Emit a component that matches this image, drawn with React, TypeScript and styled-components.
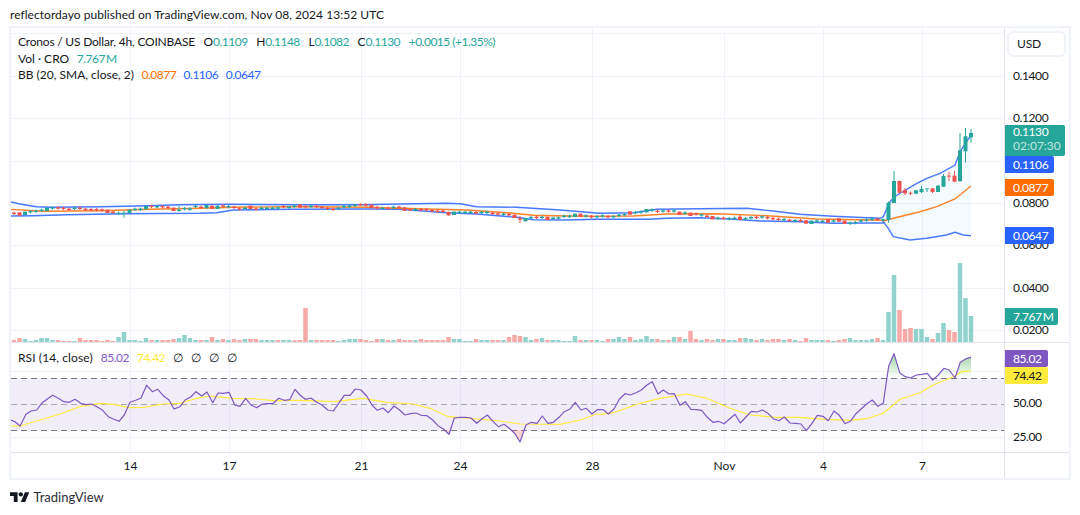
import React from "react";
import styled, { createGlobalStyle } from "styled-components";

const FONT = `Lato, "Noto Sans", "Liberation Sans", sans-serif`;
const GREEN = "#26a69a";
const RED = "#ef5350";
const BLUE = "#2962ff";
const ORANGE = "#ff6d00";
const PURPLE = "#7e57c2";
const YELLOW = "#ffeb3b";

const Global = createGlobalStyle`
  html, body { margin: 0; padding: 0; background: #fff; }
  body { font-family: ${FONT}; color: #131722; overflow: hidden; }
`;

const Page = styled.div`
  width: 1080px;
  height: 515px;
  display: flex;
  flex-direction: column;
`;
const Published = styled.div`
  height: 26px;
  padding: 0 0 0 10px;
  font-size: 12px;
  line-height: 30px;
  letter-spacing: 0.04px;
  color: #131722;
  white-space: nowrap;
`;
const Frame = styled.div`
  width: 1058px;
  height: 450px;
  margin-left: 9px;
  border: 2px solid #f0f3fa;
  display: grid;
  grid-template-columns: 993px 65px;
  grid-template-rows: 315px 110px 25px;
`;
const Pane = styled.div`
  position: relative;
  border-bottom: 1px solid #e0e3eb;
`;
const Scale = styled.div`
  position: relative;
  border-left: 1px solid #e0e3eb;
  border-bottom: 1px solid #e0e3eb;
`;
const Plot = styled.svg`
  display: block;
`;
const Legend = styled.div`
  position: absolute;
  left: 7px;
  top: 6px;
  display: flex;
  flex-direction: column;
  font-size: 12px;
  line-height: 16.6px;
`;
const LegendRow = styled.div<{ $tight?: boolean }>`
  display: flex;
  gap: ${(p) => (p.$tight ? 8.6 : 7.5)}px;
  white-space: nowrap;
  letter-spacing: ${(p) => (p.$tight ? "-0.2px" : "0")};
`;
const Pair = styled.span`
  display: inline-flex;
`;
const Val = styled.span<{ $c: string }>`
  color: ${(p) => p.$c};
  letter-spacing: -0.5px;
`;
const RsiLegend = styled(LegendRow)`
  position: absolute;
  left: 7px;
  top: 6px;
  font-size: 12px;
  line-height: 17px;
  letter-spacing: 0.1px;
  gap: 8px;
`;
const UsdButton = styled.div`
  position: absolute;
  left: 2px;
  top: 3px;
  width: 47px;
  height: 22px;
  border: 2px solid #f0f3fa;
  border-radius: 6px;
  font-size: 12px;
  letter-spacing: -0.2px;
  line-height: 22px;
  padding-left: 8px;
`;
const Tick = styled.div<{ $y: number }>`
  position: absolute;
  left: 8px;
  top: ${(p) => p.$y}px;
  transform: translateY(-50%);
  font-size: 12px;
  line-height: 14px;
  letter-spacing: -0.4px;
  color: #131722;
`;
const Tag = styled.div<{ $y: number; $h?: number; $w: number; $bg: string; $fg?: string }>`
  position: absolute;
  left: 0;
  top: ${(p) => p.$y}px;
  width: ${(p) => p.$w - 8}px;
  height: ${(p) => p.$h ?? 17}px;
  padding-left: 8px;
  background: ${(p) => p.$bg};
  color: ${(p) => p.$fg ?? "#fff"};
  font-size: 12px;
  line-height: ${(p) => (p.$h ? 14 : 17)}px;
  letter-spacing: -0.4px;
  border-radius: 0 2px 2px 0;
  white-space: nowrap;
`;
const Countdown = styled.div`
  color: rgba(255, 255, 255, 0.72);
  letter-spacing: 0;
`;
const TimeAxis = styled.div`
  position: relative;
`;
const TimeLabel = styled.div<{ $x: number }>`
  position: absolute;
  left: ${(p) => p.$x}px;
  top: 5px;
  transform: translateX(-50%);
  font-size: 12px;
  line-height: 16px;
`;
const Corner = styled.div`
  border-left: 1px solid #e0e3eb;
`;
const Footer = styled.div`
  display: flex;
  align-items: center;
  gap: 4px;
  padding: 8px 0 0 10px;
  font-size: 13px;
  line-height: 18px;
  color: #2a2e39;
`;
const Logo = styled.svg`
  display: block;
`;

const VOL = [
  9,-6,-12,9,3,6,12,12,6,-6,-3,-3,3,-12,-6,-6,-6,-3,-6,-3,15,30,6,6,3,12,-6,6,-6,-6,-9,12,21,12,6,-6,6,-15,6,-9,6,-9,-6,9,-9,-9,6,6,6,-6,6,6,-5,
  -6,-102,6,-6,-6,-6,-6,3,6,9,9,-9,-6,-3,-9,9,-6,6,-9,-6,-6,6,-9,-6,-6,-6,-6,-15,9,9,3,3,-9,6,6,-6,-6,6,-15,-21,-18,15,6,-9,12,-6,6,6,3,3,18,-6,6,-6,6,
  3,-9,9,15,9,-15,6,9,18,9,-9,6,-6,15,-15,9,-33,-9,6,-9,-6,9,-9,6,6,-12,12,9,-6,9,-6,-9,-9,6,-9,6,-3,-12,6,6,6,-6,3,-6,-9,12,6,6,6,9,-12,6,
  90,201,-96,-39,-42,39,39,15,-9,27,57,-36,-30,237,132,78,
];

// Body centres in zoomed units (y = 190 + z / 3); negative means a falling candle.
const CANDLE = [
  70,-70,-72,70,65,64,61,58,54,-54,-55,-58,55,-55,-58,-59,-59,-60,-64,-67,70,70,64,58,58,53,-49,50,-50,-52,-58,61,56,57,49,-52,50,-52,52,-48,50,-52,-57,55,-52,-57,55,55,55,54,-50,52,49,
  -48,-50,49,-49,-52,-55,-58,55,50,49,46,-44,-45,-49,-53,55,-55,52,-52,-57,-59,59,-59,-59,-62,-64,-64,-71,70,67,67,67,-68,67,67,-70,-72,73,-74,-79,-87,89,83,-82,82,-85,85,84,79,79,76,-76,78,-80,80,
  78,-80,80,76,74,-69,68,66,62,60,-64,63,-63,63,-70,69,-73,-72,75,-79,-83,85,-85,86,85,-85,86,83,-82,81,-83,-86,-88,89,-91,92,-92,-96,97,93,94,-93,93,-90,-97,100,98,93,90,88,-88,90,
];
const BIG = new Set([2,3,7,18,22,25,30,36,37,38,44,53,66,72,80,81,92,94,98,103,104,113,116,122,124,128,133,145,146,149,151,152]);
const WICK: Record<number, [number, number]> = {
  21: [62, 83], 31: [47, 65], 54: [44, 56], 64: [40, 48], 79: [58, 68], 80: [65, 77], 93: [78, 99], 133: [75, 91], 145: [90, 101],
};
const LATE: [number, number, number, number, number][] = [
  [1, 202.7, 220, 201.7, 222.7],
  [1, 181, 203, 171, 203],
  [0, 181, 192.7, 180.5, 193.3],
  [0, 190, 193.3, 188, 195],
  [0, 192.8, 193.8, 191.5, 195],
  [1, 190.3, 193.7, 190.3, 193.7],
  [1, 189, 192, 185.7, 193],
  [1, 188.4, 189.2, 188.4, 192],
  [0, 188.3, 192, 188.3, 193],
  [1, 185.7, 192, 185, 192],
  [1, 176, 186.7, 174, 186.7],
  [0, 175.6, 176.6, 171.7, 181],
  [0, 175.7, 181.7, 171, 181.7],
  [1, 150.3, 181.3, 133, 181.3],
  [1, 136.3, 151.3, 128, 162.7],
  [1, 133, 137.3, 129, 142.7],
];
const barX = (i: number) => 8.5 + 5.5 * i;

type P = [number, number];
const z = (pts: P[], ox: number, oy: number) => pts.map(([x, y]) => [ox + x / 3, oy + y / 3] as P);
const str = (pts: P[]) => pts.map(([x, y]) => `${x.toFixed(1)},${y.toFixed(1)}`).join(" ");

const UPPER: P[] = [
  ...z([[30,35],[60,42],[110,50],[150,52],[300,50],[440,47],[540,44],[688,43],[880,44]], 0, 190),
  ...z([[0,44],[184,44],[300,42],[440,40],[481,41],[530,50],[650,52],[780,60],[890,69]], 300, 190),
  ...z([[0,70],[100,68],[170,58],[300,56],[440,55],[520,63],[600,73],[700,79],[840,85]], 600, 190),
  ...z([[70,590],[88,548],[103,530],[170,490],[200,475],[240,460],[285,435],[300,395],[333,345]], 860, 20),
];
const LOWER: P[] = [
  ...z([[30,78],[100,77],[200,74],[380,71],[600,70],[650,68],[700,60],[880,58]], 0, 190),
  ...z([[0,58],[200,57],[300,58],[440,68],[530,72],[650,82],[700,89],[800,90],[890,88]], 300, 190),
  ...z([[0,88],[150,88],[200,85],[300,83],[400,88],[480,93],[600,95],[700,100],[800,99],[850,98]], 600, 190),
  ...z([[70,605],[85,625],[100,650],[150,660],[200,655],[260,645],[285,637],[310,645],[333,647]], 860, 20),
];
const BASIS: P[] = [
  ...z([[30,58],[130,64],[300,62],[450,58],[600,55],[700,52],[880,50]], 0, 190),
  ...z([[0,50],[200,52],[350,56],[500,60],[620,68],[700,76],[800,78],[890,79]], 300, 190),
  ...z([[0,79],[100,78],[200,72],[350,71],[500,77],[650,87],[850,91]], 600, 190),
  ...z([[70,603],[100,595],[180,575],[230,560],[285,537],[333,498]], 860, 20),
];

const RSI: P[] = [
  ...z([[33,240],[45,245],[60,258],[78,223],[93,213],[110,210],[125,190],[143,176],[158,166],[175,175],[192,185],[208,187],[225,178],[242,190],[258,194],[275,192],[292,201],[308,211],[325,230],[340,237],[357,244],[373,225],[390,187],[407,181],[423,174],[440,136],[457,155],[473,148],[490,167],[507,180],[522,207],[540,200],[555,180],[572,171],[588,155],[605,168],[621,156],[638,188],[654,159],[670,160],[687,157],[704,195],[720,199],[737,175],[753,195],[770,203],[787,192],[803,191],[820,190],[836,175],[853,181],[869,179],[885,148]], 0, 340),
  ...z([[0,165],[16,178],[33,174],[50,187],[66,195],[83,210],[100,213],[116,190],[133,166],[150,166],[166,147],[183,150],[200,168],[216,195],[232,211],[249,204],[265,218],[282,198],[298,209],[315,225],[331,221],[348,219],[364,226],[381,227],[398,240],[414,257],[431,268],[447,283],[463,234],[480,232],[497,232],[513,234],[530,250],[546,236],[562,225],[579,244],[595,260],[612,253],[628,265],[645,281],[660,306],[678,255],[694,247],[711,250],[727,228],[744,250],[760,247],[777,232],[793,215],[810,207],[826,187],[843,210],[859,205],[876,222],[892,209]], 300, 340),
  ...z([[10,209],[25,222],[42,207],[58,178],[75,161],[91,165],[108,158],[124,150],[141,135],[157,125],[174,162],[190,150],[207,162],[223,161],[240,196],[256,185],[273,208],[289,209],[305,211],[322,232],[339,247],[355,244],[372,251],[388,238],[405,223],[421,249],[438,231],[454,214],[471,216],[487,210],[504,220],[520,236],[537,242],[553,231],[570,249],[586,250],[603,252],[619,272],[636,250],[652,226],[669,229],[685,242],[702,213],[718,226],[735,251],[751,244],[768,221],[784,206],[801,191],[817,180],[834,199],[850,189],[866,78],[882,41],[899,98],[916,110],[932,114],[949,105],[965,103],[982,100],[998,120],[1015,105],[1031,85],[1048,90],[1065,114],[1081,67],[1098,56],[1113,52]], 600, 340),
];
const RSI_MA: P[] = [
  ...z([[33,258],[60,258],[120,240],[180,222],[240,200],[300,190],[340,193],[390,203],[430,202],[490,192],[540,190],[590,175],[630,168],[700,175],[760,176],[820,182],[890,181]], 0, 340),
  ...z([[0,181],[100,185],[190,175],[260,187],[340,192],[390,205],[445,230],[510,235],[600,243],[660,252],[780,253],[840,240],[890,222]], 300, 340),
  ...z([[0,224],[40,218],[120,190],[180,175],[260,162],[320,175],[390,205],[450,225],[530,232],[600,232],[680,238],[750,241],[800,236],[850,220],[900,178],[960,158],[1000,135],[1065,108],[1085,95],[1113,93]], 600, 340),
];

const VGRID = [130.5, 229.5, 361.5, 460.5, 592.5, 724.5, 823.5, 922.5];
const MAIN_H = [33.5, 76.5, 118.5, 161.5, 203.5, 245.5, 288.5, 330.5];
const RSI_H = [371.5, 437.5];
const PX1 = 11;
const PX2 = 1004;

const Grid = ({ hs, y1, y2 }: { hs: number[]; y1: number; y2: number }) => (
  <g stroke="#f0f3fa" strokeWidth="1" shapeRendering="crispEdges">
    {VGRID.map((x) => <line key={x} x1={x} x2={x} y1={y1} y2={y2} />)}
    {hs.map((y) => <line key={y} x1={PX1} x2={PX2} y1={y} y2={y} />)}
  </g>
);

const Candles = () => (
  <g>
    {CANDLE.map((v, i) => {
      const c = v > 0 ? GREEN : RED;
      const zy = Math.abs(v);
      const h = BIG.has(i) ? 5 : 2;
      const w = WICK[i] ?? [zy - 5, zy + 5];
      const x = barX(i);
      return (
        <g key={i} fill={c}>
          <rect x={x - 0.5} y={190 + w[0] / 3} width={1} height={(w[1] - w[0]) / 3} />
          <rect x={x - 2} y={190 + (zy - h) / 3} width={4} height={(2 * h) / 3} />
        </g>
      );
    })}
    {LATE.map(([up, t, b, hi, lo], k) => {
      const x = barX(160 + k);
      return (
        <g key={k} fill={up ? GREEN : RED}>
          <rect x={x - 0.5} y={hi} width={1} height={lo - hi} />
          <rect x={x - 2} y={t} width={4} height={b - t} />
        </g>
      );
    })}
  </g>
);

const MainChart = () => (
  <Plot width={993} height={314} viewBox="11 28 993 314">
    <Grid hs={MAIN_H} y1={28} y2={342} />
    <polygon points={str([...UPPER, ...[...LOWER].reverse()])} fill="#2196f3" fillOpacity="0.05" />
    {VOL.map((v, i) => {
      const h = Math.abs(v) / 3;
      return (
        <rect key={i} x={barX(i) - 2.25} y={342 - h} width={4.5} height={h} fill={v > 0 ? "#92d2cc" : "#f7a9a8"} />
      );
    })}
    <polyline points={str(UPPER)} fill="none" stroke={BLUE} strokeOpacity="0.85" strokeWidth="1.4" />
    <polyline points={str(LOWER)} fill="none" stroke={BLUE} strokeOpacity="0.85" strokeWidth="1.4" />
    <polyline points={str(BASIS)} fill="none" stroke={ORANGE} strokeOpacity="0.85" strokeWidth="1.4" />
    <Candles />
  </Plot>
);

const RsiChart = () => {
  const first = RSI[0];
  const last = RSI[RSI.length - 1];
  const area = str([[first[0], 378], ...RSI, [last[0], 378]]);
  const areaLow = str([[first[0], 430], ...RSI, [last[0], 430]]);
  return (
    <Plot width={993} height={109} viewBox="11 343 993 109">
      <defs>
        <linearGradient id="over" x1="0" y1="353" x2="0" y2="378" gradientUnits="userSpaceOnUse">
          <stop offset="0" stopColor="#4caf50" stopOpacity="0.55" />
          <stop offset="1" stopColor="#4caf50" stopOpacity="0" />
        </linearGradient>
        <clipPath id="above"><rect x="11" y="343" width="993" height="35" /></clipPath>
        <clipPath id="below"><rect x="11" y="430" width="993" height="22" /></clipPath>
      </defs>
      <Grid hs={RSI_H} y1={343} y2={452} />
      <rect x={PX1} y={378} width={PX2 - PX1} height={52} fill={PURPLE} fillOpacity="0.1" />
      <g strokeWidth="1" shapeRendering="crispEdges" strokeDasharray="6 4">
        <line x1={PX1} x2={PX2} y1={378.5} y2={378.5} stroke="#787b86" />
        <line x1={PX1} x2={PX2} y1={404.5} y2={404.5} stroke="#787b86" strokeOpacity="0.6" />
        <line x1={PX1} x2={PX2} y1={430.5} y2={430.5} stroke="#787b86" />
      </g>
      <polygon points={area} fill="url(#over)" clipPath="url(#above)" />
      <polygon points={areaLow} fill="#ef5350" fillOpacity="0.25" clipPath="url(#below)" />
      <polyline points={str(RSI_MA)} fill="none" stroke={YELLOW} strokeWidth="1.2" />
      <polyline points={str(RSI)} fill="none" stroke={PURPLE} strokeWidth="1.2" strokeLinejoin="round" />
    </Plot>
  );
};

const TIMES: [string, number][] = [["14", 119.5], ["17", 218.5], ["21", 350.5], ["24", 449.5], ["28", 581.5], ["Nov", 713.5], ["4", 812.5], ["7", 911.5]];
const PRICES: [string, number][] = [["0.1400", 48], ["0.1200", 90], ["0.0800", 175], ["0.0600", 217], ["0.0400", 259.5], ["0.0200", 301.5]];

export default function App() {
  return (
    <Page>
      <Global />
      <Published>reflectordayo published on TradingView.com, Nov 08, 2024 13:52 UTC</Published>
      <Frame>
        <Pane>
          <MainChart />
          <Legend>
            <LegendRow $tight>
              <span>Cronos / US Dollar, 4h, COINBASE</span>
              <Pair>O<Val $c={GREEN}>0.1109</Val></Pair>
              <Pair>H<Val $c={GREEN}>0.1148</Val></Pair>
              <Pair>L<Val $c={GREEN}>0.1082</Val></Pair>
              <Pair>C<Val $c={GREEN}>0.1130</Val></Pair>
              <Val $c={GREEN}>+0.0015 (+1.35%)</Val>
            </LegendRow>
            <LegendRow>
              <span>Vol · CRO</span>
              <Val $c={GREEN}>7.767{"\u2009"}M</Val>
            </LegendRow>
            <LegendRow>
              <span>BB (20, SMA, close, 2)</span>
              <Val $c={ORANGE}>0.0877</Val>
              <Val $c={BLUE}>0.1106</Val>
              <Val $c={BLUE}>0.0647</Val>
            </LegendRow>
          </Legend>
        </Pane>
        <Scale>
          <UsdButton>USD</UsdButton>
          {PRICES.map(([t, y]) => <Tick key={t} $y={y}>{t}</Tick>)}
          <Tag $y={97} $h={31} $w={60} $bg={GREEN}>
            0.1130
            <Countdown>02:07:30</Countdown>
          </Tag>
          <Tag $y={128} $w={49} $bg={BLUE}>0.1106</Tag>
          <Tag $y={151} $w={49} $bg={ORANGE}>0.0877</Tag>
          <Tag $y={199} $w={49} $bg={BLUE}>0.0647</Tag>
          <Tag $y={280} $w={53} $bg={GREEN}>7.767{"\u2009"}M</Tag>
        </Scale>
        <Pane>
          <RsiChart />
          <RsiLegend>
            <span>RSI (14, close)</span>
            <Val $c={PURPLE}>85.02</Val>
            <Val $c={YELLOW}>74.42</Val>
            <span>∅</span>
            <span>∅</span>
            <span>∅</span>
            <span>∅</span>
          </RsiLegend>
        </Pane>
        <Scale>
          <Tick $y={60}>50.00</Tick>
          <Tick $y={94}>25.00</Tick>
          <Tag $y={7} $w={43} $bg={PURPLE}>85.02</Tag>
          <Tag $y={24} $w={43} $bg={YELLOW} $fg="#131722">74.42</Tag>
        </Scale>
        <TimeAxis>
          {TIMES.map(([t, x]) => <TimeLabel key={t} $x={x}>{t}</TimeLabel>)}
        </TimeAxis>
        <Corner />
      </Frame>
      <Footer>
        <Logo width="19.5" height="10" viewBox="0 4 36 18" fill="#131722">
          <path d="M14 22H7V11H0V4h14v18zM28 22h-8l7.5-18h8L28 22z" />
          <circle cx="20" cy="8" r="4" />
        </Logo>
        TradingView
      </Footer>
    </Page>
  );
}
